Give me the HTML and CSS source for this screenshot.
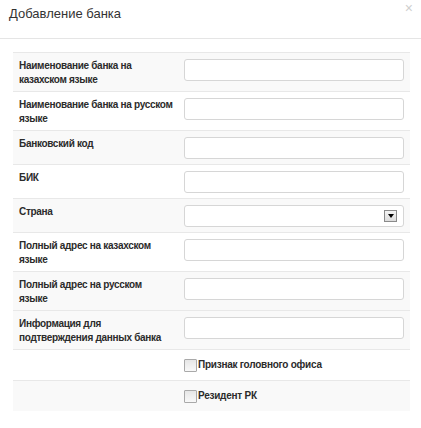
FILE: index.html
```html
<!DOCTYPE html>
<html lang="ru">
<head>
<meta charset="utf-8">
<link rel="stylesheet" href="styles.css">
</head>
<body>
<div class="modal">
  <div class="modal-header">
    <h3 class="title">Добавление банка</h3>
    <span class="close">×</span>
  </div>
  <div class="modal-body">
    <table class="form-table">
      <colgroup><col class="c-lbl"><col class="c-fld"></colgroup>
      <tr class="odd"><td class="lbl">Наименование банка на<br>казахском языке</td><td class="fld"><input class="inp" type="text"></td></tr>
      <tr><td class="lbl">Наименование банка на русском<br>языке</td><td class="fld"><input class="inp" type="text"></td></tr>
      <tr class="odd"><td class="lbl">Банковский код</td><td class="fld"><input class="inp" type="text"></td></tr>
      <tr><td class="lbl">БИК</td><td class="fld"><input class="inp" type="text"></td></tr>
      <tr class="odd"><td class="lbl">Страна</td><td class="fld"><div class="select"><span class="sel-btn"><svg width="6" height="4" viewBox="0 0 6 4"><path d="M0 0h6L3 4z" fill="#000"/></svg></span></div></td></tr>
      <tr><td class="lbl">Полный адрес на казахском<br>языке</td><td class="fld"><input class="inp" type="text"></td></tr>
      <tr class="odd"><td class="lbl">Полный адрес на русском<br>языке</td><td class="fld"><input class="inp" type="text"></td></tr>
      <tr class="odd"><td class="lbl">Информация для<br>подтверждения данных банка</td><td class="fld"><input class="inp" type="text"></td></tr>
      <tr><td class="lbl"></td><td class="fld chk-cell"><label class="chk"><span class="box"></span>Признак головного офиса</label></td></tr>
      <tr class="odd"><td class="lbl"></td><td class="fld chk-cell"><label class="chk"><span class="box"></span>Резидент РК</label></td></tr>
    </table>
  </div>
</div>
</body>
</html>
```
FILE: styles.css
```css
html, body {
  margin: 0;
  padding: 0;
  background: #fff;
}
body {
  font-family: "Liberation Sans", Arial, sans-serif;
  color: #333;
}
.modal {
  width: 421px;
}
.modal-header {
  position: relative;
  height: 38px;
  border-bottom: 1px solid #e5e5e5;
  padding: 0 9px;
}
.title {
  margin: 0;
  padding-top: 5px;
  font-size: 13px;
  font-weight: normal;
  line-height: 18px;
  color: #333;
}
.close {
  position: absolute;
  right: 8px;
  top: 1px;
  font-size: 14px;
  line-height: 14px;
  color: #cfcfcf;
}
.modal-body {
  padding: 13px 11px 0 13px;
}
.form-table {
  width: 397px;
  table-layout: fixed;
  border-collapse: collapse;
  border-spacing: 0;
}
.c-lbl {
  width: 165px;
}
.c-fld {
  width: 232px;
}
.form-table td {
  border-top: 1px solid #e8e8e8;
  padding: 6px 6px 5px;
  vertical-align: top;
}
.form-table tr.odd td {
  background: #f9f9f9;
}
.lbl {
  font-size: 10px;
  letter-spacing: -0.3px;
  font-weight: bold;
  line-height: 13.5px;
  white-space: nowrap;
  color: #2b2b2b;
}
.inp, .select {
  display: block;
  box-sizing: border-box;
  width: 220px;
  height: 22px;
  margin: 0;
  border: 1px solid #d6d6d6;
  border-radius: 3px;
  background: #fff;
  padding: 0;
}
.select {
  position: relative;
}
.sel-btn {
  position: absolute;
  right: 6px;
  top: 4px;
  width: 13px;
  height: 12px;
  box-sizing: border-box;
  border: 1px solid #8a8a8a;
  background: linear-gradient(#f4f4f4, #dcdcdc);
  display: flex;
  align-items: center;
  justify-content: center;
}
.sel-btn svg {
  width: 6px;
  height: 4px;
}
.form-table td.chk-cell {
  padding-top: 8px;
  padding-bottom: 5px;
  height: 17px;
}
.chk {
  display: flex;
  align-items: center;
  gap: 1px;
  font-size: 10px;
  letter-spacing: -0.25px;
  font-weight: bold;
  line-height: 14px;
  color: #2b2b2b;
}
.box {
  display: inline-block;
  width: 11px;
  height: 11px;
  border: 1px solid #a9a9a9;
  background: linear-gradient(#e6e6e6, #f8f8f8);
  border-radius: 1px;
}
```
